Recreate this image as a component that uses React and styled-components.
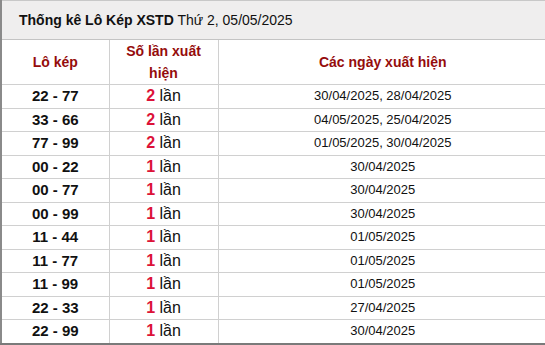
import React from 'react';
import styled, { createGlobalStyle } from 'styled-components';

const GlobalStyle = createGlobalStyle`
  body {
    margin: 0;
    background: #fff;
    font-family: "Liberation Sans", Arial, sans-serif;
    overflow: hidden;
  }
`;

const Wrap = styled.div`
  width: 545px;
  height: 345px;
  overflow: hidden;
`;

const Table = styled.table`
  width: 548px;
  border-collapse: collapse;
  border-top: 1px solid #c8c8c8;
  border-left: 2px solid #8a8a8a;
  border-bottom: 2px solid #7a7a7a;
  table-layout: fixed;
`;

const TitleCell = styled.th`
  height: 38px;
  padding: 0 0 0 17px;
  background: #efeeee;
  border-bottom: 1px solid #c4c4c4;
  text-align: left;
  font-size: 14px;
  font-weight: normal;
  color: #111;
  b {
    font-weight: bold;
  }
`;

const HeadCell = styled.th`
  height: 44px;
  padding: 0 4px;
  border: 1px solid #d0d0d0;
  border-top: none;
  color: #950c0c;
  font-size: 14px;
  font-weight: bold;
  line-height: 22px;
  text-align: center;
`;

const Cell = styled.td`
  height: 22.5px;
  padding: 0;
  border: 1px solid #d0d0d0;
  text-align: center;
  color: #111;
  font-size: ${(p) => p.size || 13}px;
  font-weight: ${(p) => (p.bold ? 'bold' : 'normal')};
  line-height: 22px;
`;

const Count = styled.span`
  color: #dc1238;
  font-weight: bold;
`;

const rows = [
  ['22 - 77', 2, '30/04/2025, 28/04/2025'],
  ['33 - 66', 2, '04/05/2025, 25/04/2025'],
  ['77 - 99', 2, '01/05/2025, 30/04/2025'],
  ['00 - 22', 1, '30/04/2025'],
  ['00 - 77', 1, '30/04/2025'],
  ['00 - 99', 1, '30/04/2025'],
  ['11 - 44', 1, '01/05/2025'],
  ['11 - 77', 1, '01/05/2025'],
  ['11 - 99', 1, '01/05/2025'],
  ['22 - 33', 1, '27/04/2025'],
  ['22 - 99', 1, '30/04/2025'],
];

export default function App() {
  return (
    <Wrap>
      <GlobalStyle />
      <Table>
        <colgroup>
          <col style={{ width: 108 }} />
          <col style={{ width: 109 }} />
          <col />
        </colgroup>
        <thead>
          <tr>
            <TitleCell colSpan={3}>
              <b>Thống kê Lô Kép XSTD</b> Thứ 2, 05/05/2025
            </TitleCell>
          </tr>
          <tr>
            <HeadCell>Lô kép</HeadCell>
            <HeadCell>Số lần xuất hiện</HeadCell>
            <HeadCell>Các ngày xuất hiện</HeadCell>
          </tr>
        </thead>
        <tbody>
          {rows.map(([pair, n, dates]) => (
            <tr key={pair}>
              <Cell bold size={15}>{pair}</Cell>
              <Cell size={16}>
                <Count>{n}</Count> lần
              </Cell>
              <Cell>{dates}</Cell>
            </tr>
          ))}
        </tbody>
      </Table>
    </Wrap>
  );
}
